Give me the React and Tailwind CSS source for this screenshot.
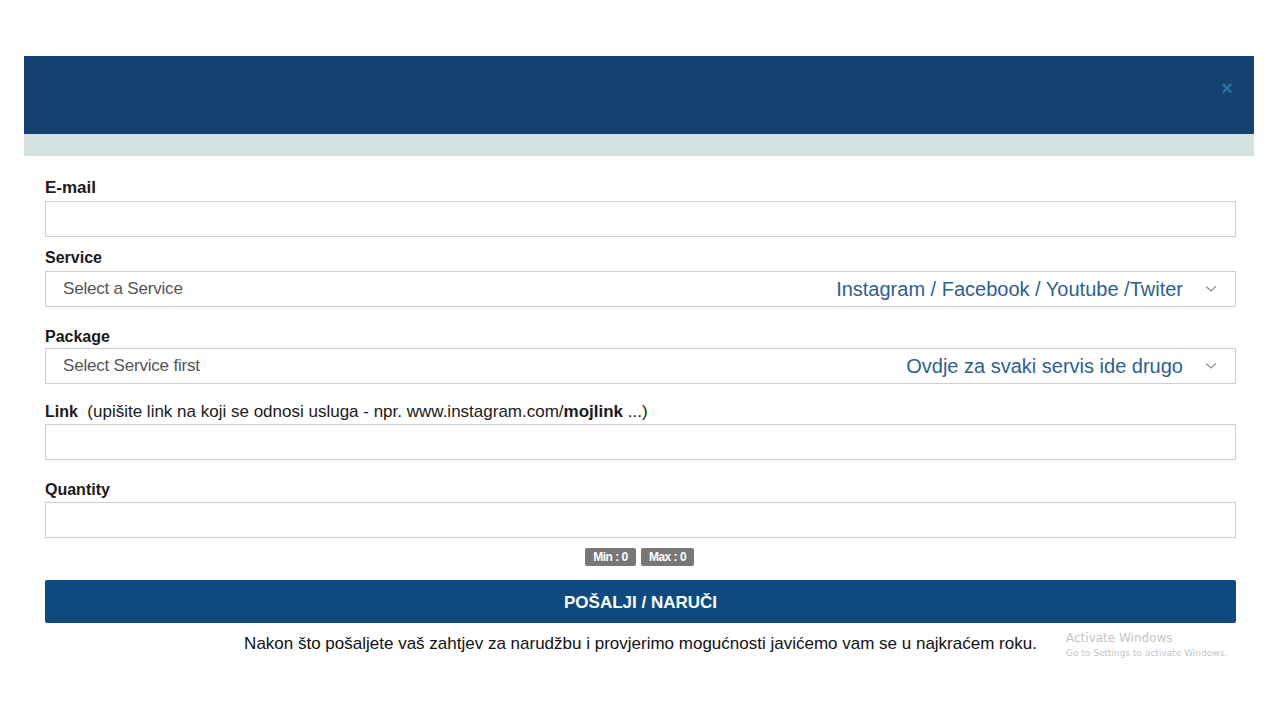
import React from "react";

const Chevron = () => (
    <svg width="12" height="8" viewBox="0 0 12 8" fill="none" className="ml-[22px]">
        <path d="M1 1.5 L6 6 L11 1.5" stroke="#8a8a8a" strokeWidth="1.1" />
    </svg>
);

const App = () => {
    return (
        <div className="relative min-h-[720px] bg-white font-['Liberation_Sans',Arial,sans-serif] pt-[56px]">
            <div className="mx-[24px] w-[1230px]">
                {/* Header */}
                <div className="h-[78px] bg-[#154170] flex items-start justify-end pr-[21px] pt-[22px]">
                    <span className="text-[#2b70a6] text-[20px] font-bold leading-[20px]">×</span>
                </div>
                <div className="h-[22px] bg-[#d3e0e0]"></div>

                {/* Form */}
                <div className="bg-white pl-[21px] pr-[18px] pt-[22px]">
                    <label className="block text-[17px] font-bold text-[#1a1a1a] leading-[20px]">E-mail</label>
                    <input className="mt-[3px] block w-full h-[36px] border border-[#cfcfcf] bg-[#fdfdfd]" />

                    <label className="block mt-[12px] text-[16px] font-bold text-[#1a1a1a] leading-[18px]">Service</label>
                    <div className="mt-[4px] h-[36px] border border-[#cfcfcf] flex items-center pl-[17px] pr-[18px]">
                        <span className="text-[17px] text-[#555] tracking-[-0.2px]">Select a Service</span>
                        <span className="ml-auto text-[20px] text-[#2e5f8e]">Instagram / Facebook / Youtube /Twiter</span>
                        <Chevron />
                    </div>

                    <label className="block mt-[21px] text-[16px] font-bold text-[#1a1a1a] leading-[18px]">Package</label>
                    <div className="mt-[2px] h-[36px] border border-[#cfcfcf] flex items-center pl-[17px] pr-[18px]">
                        <span className="text-[17px] text-[#555] tracking-[-0.2px]">Select Service first</span>
                        <span className="ml-auto text-[20px] text-[#2e5f8e]">Ovdje za svaki servis ide drugo</span>
                        <Chevron />
                    </div>

                    <label className="block mt-[19px] text-[17px] text-[#1a1a1a] leading-[18px]">
                        <span className="font-bold text-[16px]">Link</span>&nbsp; (upišite link na koji se odnosi usluga - npr. www.instagram.com/<span className="font-bold">mojlink</span> ...)
                    </label>
                    <input className="mt-[3px] block w-full h-[36px] border border-[#cfcfcf] bg-[#fdfdfd]" />

                    <label className="block mt-[21px] text-[16px] font-bold text-[#1a1a1a] leading-[18px]">Quantity</label>
                    <input className="mt-[3px] block w-full h-[36px] border border-[#cfcfcf] bg-[#fdfdfd]" />

                    {/* Min / Max */}
                    <div className="mt-[10px] flex justify-center gap-[5px] pr-[2px]">
                        <span className="h-[18px] w-[51px] text-center rounded-[2px] bg-[#777] text-white text-[12px] font-bold leading-[18px] tracking-[-0.5px]">Min : 0</span>
                        <span className="h-[18px] w-[53px] text-center rounded-[2px] bg-[#777] text-white text-[12px] font-bold leading-[18px] tracking-[-0.5px]">Max : 0</span>
                    </div>

                    <button className="mt-[14px] w-full h-[43px] bg-[#0e4a80] rounded-[2px] text-white text-[17px] font-bold leading-[20px] pt-[3px]">
                        POŠALJI / NARUČI
                    </button>

                    <p className="mt-[11px] text-center text-[17px] leading-[20px] text-[#111]">
                        Nakon što pošaljete vaš zahtjev za narudžbu i provjerimo mogućnosti javićemo vam se u najkraćem roku.
                    </p>
                </div>
            </div>

            {/* Windows watermark */}
            <div className="absolute left-[1066px] top-[630px] text-[#c4c4c4] font-['DejaVu_Sans',sans-serif]">
                <div className="text-[12px] leading-[16px]">Activate Windows</div>
                <div className="text-[9px] leading-[14px]">Go to Settings to activate Windows.</div>
            </div>
        </div>
    );
};

export default App;
